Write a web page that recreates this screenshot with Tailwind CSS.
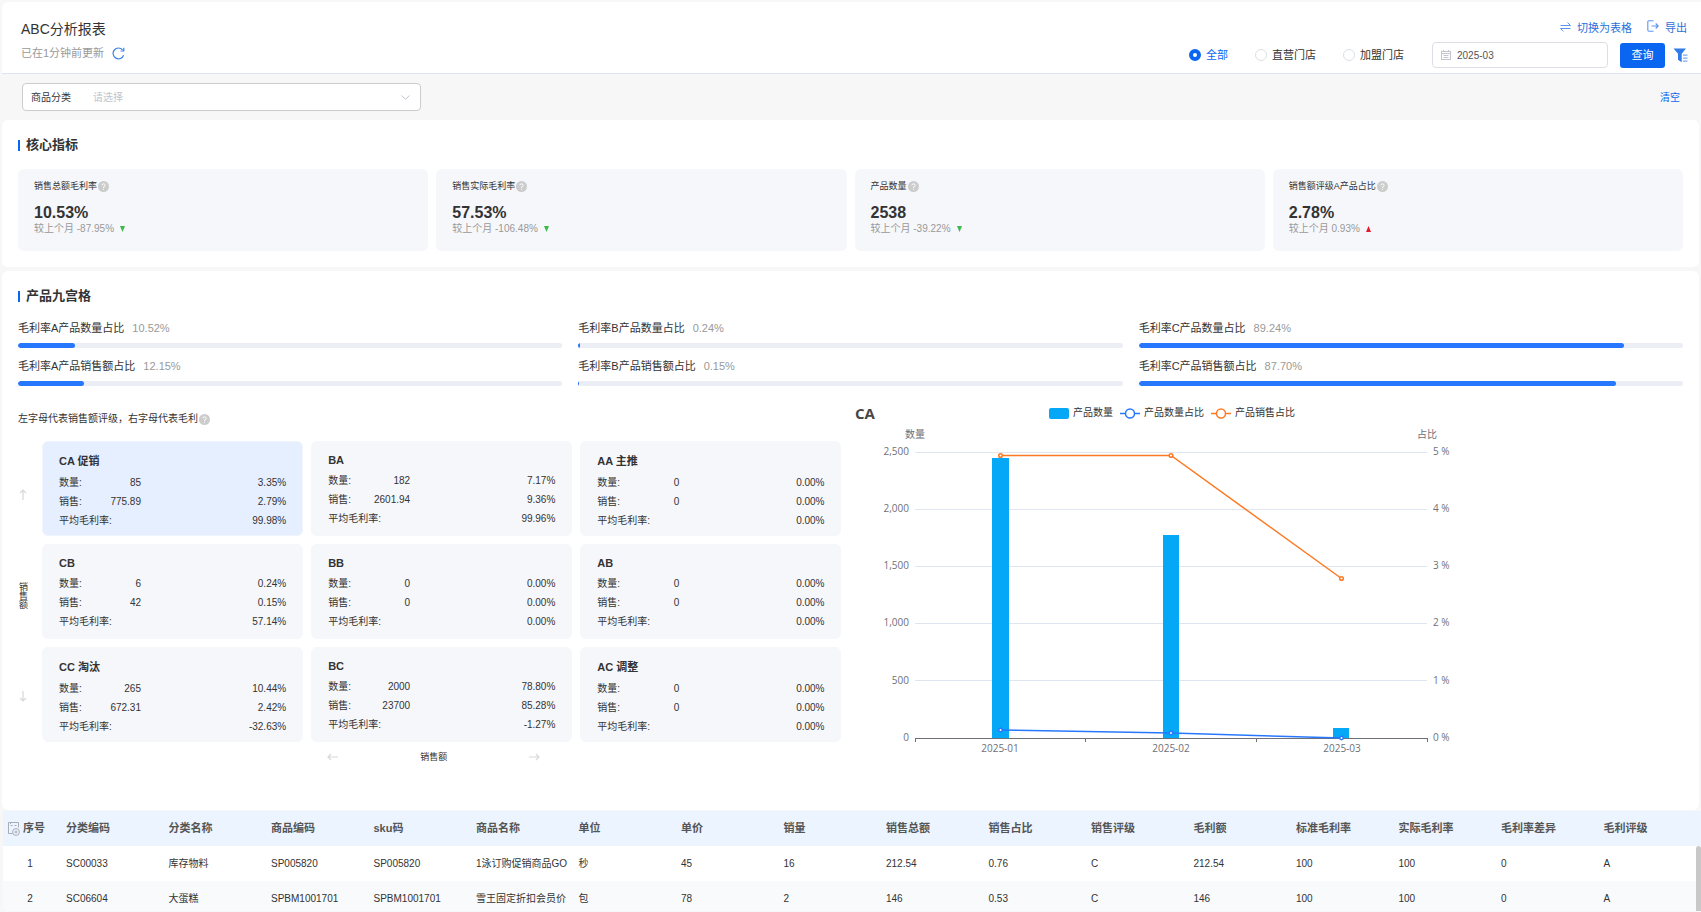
<!doctype html>
<html lang="zh-CN">
  <head>
    <meta charset="UTF-8" />
    <meta name="viewport" content="width=device-width, initial-scale=1.0" />
    <title>ABC分析报表</title>
    <script src="https://cdn.jsdelivr.net/npm/@tailwindcss/browser@4"></script>
  </head>
  <body
    class="flex h-screen flex-col overflow-hidden bg-[#f7f7f7] pt-[2px] pb-px pl-[2px] font-['Liberation_Sans','Noto_Sans_CJK_SC',sans-serif] text-[#333]"
  >
    <header
      class="flex shrink-0 justify-between rounded-tl-md border-b border-[#dbe3f5] bg-white pr-[13px] pb-[5px] pl-[19px]"
    >
      <div class="pt-[17px]">
        <h1 class="text-sm leading-5">ABC分析报表</h1>
        <div class="mt-[6px] flex items-center gap-2 text-[11px] leading-4 text-[#999]">
          已在1分钟前更新
          <button type="button" aria-label="刷新">
            <svg class="block size-[13px]" viewBox="0 0 13 13" fill="none" stroke="#3b82e0" stroke-width="1.2">
              <path d="M11.6 8.2A5.4 5.4 0 1 1 10.6 2.9" />
              <path d="M11.8 0.8V4H8.6" />
            </svg>
          </button>
        </div>
      </div>

      <div class="flex flex-col items-end pt-[18px]">
        <div class="mr-px flex gap-[15px] text-[11px] leading-4 text-[#2b6fdb]">
          <a href="#" class="flex items-center gap-[6px]">
            <svg class="-mt-1 size-[11px]" viewBox="0 0 11 11" fill="none" stroke="#5a96ee" stroke-width="1">
              <path d="M0.5 4.5H10.5L7.5 1.5M10.5 7.5H0.5L3.5 10.3" />
            </svg>
            切换为表格
          </a>
          <a href="#" class="flex items-center gap-[6px]">
            <svg class="-mt-1 size-3" viewBox="0 0 12 12" fill="none" stroke="#5a96ee" stroke-width="1.1">
              <path d="M6.5 0.8H2A1.2 1.2 0 0 0 0.8 2V10A1.2 1.2 0 0 0 2 11.2H6.5M4.5 6H11M8.7 3.5L11.2 6L8.7 8.5" />
            </svg>
            导出
          </a>
        </div>
        <form class="mt-[6px] flex items-center text-[11px]" onsubmit="event.preventDefault()">
          <div class="mr-7 flex items-center gap-[27px]">
            <label class="flex items-center gap-[5px] text-[#0a66f0]">
              <input
                type="radio"
                name="store"
                checked
                class="size-3 appearance-none rounded-full border border-[#dcdfe6] bg-white checked:border-4 checked:border-[#0a66f0]"
              />
              全部
            </label>
            <label class="flex items-center gap-[5px]">
              <input
                type="radio"
                name="store"
                class="size-3 appearance-none rounded-full border border-[#dcdfe6] bg-white checked:border-4 checked:border-[#0a66f0]"
              />
              直营门店
            </label>
            <label class="flex items-center gap-[5px]">
              <input
                type="radio"
                name="store"
                class="size-3 appearance-none rounded-full border border-[#dcdfe6] bg-white checked:border-4 checked:border-[#0a66f0]"
              />
              加盟门店
            </label>
          </div>
          <label class="mr-3 flex h-[26px] w-44 items-center gap-[6px] rounded-sm border border-[#dcdfe6] pl-2">
            <svg class="size-[10px] shrink-0" viewBox="0 0 10 10" fill="none" stroke="#c5c5d0" stroke-width="1">
              <rect x="0.5" y="1.5" width="9" height="8" />
              <path d="M0.5 3.5H9.5M2.5 5.5H7.5M2.5 7.5H7.5M2.5 0V2M7.5 0V2" />
            </svg>
            <input type="text" value="2025-03" aria-label="月份" class="w-full text-[10px] text-[#555] outline-none" />
          </label>
          <button type="submit" class="h-[25px] w-[45px] rounded-[3px] bg-[#0a66f0] text-white">查询</button>
          <button type="button" aria-label="筛选" class="ml-2">
            <svg class="block h-[15px] w-[15px]" viewBox="0 0 15 15">
              <path fill="#2f7bea" d="M0.5 0.5H13L8.7 5.8V14.2L5 11.8V5.8Z" />
              <path stroke="#78aaf3" stroke-width="1.3" d="M10 7.2H14.5M10 10.2H14.5M10 13.2H14.5" />
            </svg>
          </button>
        </form>
      </div>
    </header>

    <div class="flex shrink-0 items-center justify-between py-[9px] pr-[21px] pl-5 text-[10px]">
      <div class="relative flex h-7 w-[399px] items-center rounded border border-[#ccc] bg-white pl-2">
        <label for="category" class="w-[62px] shrink-0">商品分类</label>
        <select id="category" class="h-full w-full appearance-none text-[#c0c4cc] outline-none">
          <option>请选择</option>
        </select>
        <svg class="pointer-events-none absolute right-[10px] h-[5px] w-[9px]" viewBox="0 0 9 5" fill="none" stroke="#c0c4cc">
          <path d="M0.5 0.5L4.5 4.3L8.5 0.5" />
        </svg>
      </div>
      <button type="button" class="text-[#0a66f0]">清空</button>
    </div>

    <section class="mr-[2px] shrink-0 rounded-md bg-white px-4 pt-[15px] pb-4">
      <h2 class="flex items-center gap-[6px] text-[13px] leading-5 font-bold">
        <span class="h-[11px] w-[2px] bg-[#0a66f0]"></span>核心指标
      </h2>
      <div id="kpis" class="mt-[14px] grid grid-cols-4 gap-2"></div>
    </section>

    <section class="mt-1 mr-[2px] shrink-0 rounded-md bg-white px-4 pt-[15px] pb-[45px]">
      <h2 class="flex items-center gap-[6px] text-[13px] leading-5 font-bold">
        <span class="h-[11px] w-[2px] bg-[#0a66f0]"></span>产品九宫格
      </h2>
      <div id="progress" class="mt-[14px] grid grid-cols-3 gap-x-4 gap-y-[10px]"></div>

      <div class="grid grid-cols-2 gap-[18px]">
        <div class="pt-[25px]">
          <p class="flex items-center gap-px text-[10px] leading-4">
            左字母代表销售额评级，右字母代表毛利
            <svg class="size-[11px]" viewBox="0 0 11 11">
              <circle cx="5.5" cy="5.5" r="5.5" fill="#ccc" />
              <path d="M3.9 4.3A1.6 1.6 0 1 1 5.5 6V6.9M5.5 7.8V8.8" fill="none" stroke="#fff" />
            </svg>
          </p>
          <div class="mt-[14px] flex">
            <!-- y axis -->
            <div class="flex w-6 shrink-0 flex-col items-start justify-between pt-12 pb-10 text-[9px]">
              <svg class="h-[11px] w-[10px]" viewBox="0 0 10 11" fill="none" stroke="#d8d8d8" stroke-width="1.2">
                <path d="M5 11V1M2 4L5 1L8 4" />
              </svg>
              <span class="leading-[10px] [text-orientation:upright] [writing-mode:vertical-rl]">销售额</span>
              <svg class="h-[11px] w-[10px]" viewBox="0 0 10 11" fill="none" stroke="#d8d8d8" stroke-width="1.2">
                <path d="M5 0V10M2 7L5 10L8 7" />
              </svg>
            </div>
            <div id="nine" class="grid grow grid-cols-3 gap-2"></div>
          </div>
          <!-- x axis -->
          <div class="mt-[7px] ml-6 grid grid-cols-3 gap-2 text-[9px] leading-4">
            <div class="col-start-2 flex items-center justify-between pr-8 pl-4">
              <svg class="h-[10px] w-[11px]" viewBox="0 0 11 10" fill="none" stroke="#d8d8d8" stroke-width="1.2">
                <path d="M11 5H1M4 2L1 5L4 8" />
              </svg>
              <span>销售额</span>
              <svg class="h-[10px] w-[11px]" viewBox="0 0 11 10" fill="none" stroke="#d8d8d8" stroke-width="1.2">
                <path d="M0 5H10M7 2L10 5L7 8" />
              </svg>
            </div>
          </div>
        </div>

        <svg
          class="mt-[14px] -ml-[10px] h-[360px] w-[600px] font-['Open_Sans','Noto_Sans_CJK_SC',sans-serif] text-[10px]"
          viewBox="0 0 600 360"
          fill="#6e7079"
        >
          <text x="5" y="19" class="text-[15px] font-bold" fill="#464646">CA</text>

          <g fill="#333">
            <rect x="199" y="8" width="20" height="11" rx="2" fill="#05a8f7" />
            <text x="223" y="16">产品数量</text>
            <path d="M270 13.5H290" stroke="#2878ff" stroke-width="1.5" />
            <circle cx="280" cy="13.5" r="4.5" fill="#fff" stroke="#2878ff" stroke-width="1.5" />
            <text x="294" y="16">产品数量占比</text>
            <path d="M361 13.5H381" stroke="#fc7a24" stroke-width="1.5" />
            <circle cx="371" cy="13.5" r="4.5" fill="#fff" stroke="#fc7a24" stroke-width="1.5" />
            <text x="385" y="16">产品销售占比</text>
          </g>

          <text x="65" y="38" text-anchor="middle">数量</text>
          <text x="577" y="38" text-anchor="middle">占比</text>

          <path
            d="M65 52.5H577M65 109.5H577M65 166.5H577M65 223.5H577M65 280.5H577"
            stroke="#e0e6f1"
          />
          <g text-anchor="end">
            <text x="59" y="55">2,500</text>
            <text x="59" y="112">2,000</text>
            <text x="59" y="169">1,500</text>
            <text x="59" y="226">1,000</text>
            <text x="59" y="284">500</text>
            <text x="59" y="341">0</text>
          </g>
          <g>
            <text x="583" y="55">5 %</text>
            <text x="583" y="112">4 %</text>
            <text x="583" y="169">3 %</text>
            <text x="583" y="226">2 %</text>
            <text x="583" y="284">1 %</text>
            <text x="583" y="341">0 %</text>
          </g>

          <g fill="#05a8f7">
            <rect x="142" y="58" width="17" height="280" />
            <rect x="313" y="135" width="16" height="203" />
            <rect x="483" y="328" width="16" height="10" />
          </g>
          <path d="M65 338.5H577.5M65.5 338V342M235.5 338V342M406.5 338V342M577.5 338V342" stroke="#6e7079" fill="none" />
          <g text-anchor="middle">
            <text x="150" y="352">2025-01</text>
            <text x="321" y="352">2025-02</text>
            <text x="492" y="352">2025-03</text>
          </g>

          <g fill="none" stroke="#2878ff" stroke-width="1.5">
            <path d="M150.5 330L321 333L491.5 338" />
            <g fill="#fff" stroke-width="1.5">
              <circle cx="150.5" cy="330" r="1.7" />
              <circle cx="321" cy="333" r="1.7" />
              <circle cx="491.5" cy="338" r="1.7" />
            </g>
          </g>
          <g fill="none" stroke="#fc7a24" stroke-width="1.5">
            <path d="M150.5 55.5H321L491.5 178.5" />
            <g fill="#fff" stroke-width="1.5">
              <circle cx="150.5" cy="55.5" r="1.8" />
              <circle cx="321" cy="55.5" r="1.8" />
              <circle cx="491.5" cy="178.5" r="1.8" />
            </g>
          </g>
        </svg>
      </div>
    </section>

    <div class="relative mt-px ml-px grow overflow-hidden rounded-bl-md bg-white">
      <table class="w-full table-fixed text-left text-[10px]">
        <thead class="bg-[#ecf4ff] text-[11px] text-[#555]">
          <tr id="thead" class="h-[35px]"></tr>
        </thead>
        <tbody id="tbody"></tbody>
      </table>
      <div class="absolute top-[35px] right-0 h-24 w-[5px] rounded-t-sm bg-[#c8c8c8]"></div>
    </div>

    <script>
      const kpis = [
        ["销售总额毛利率", "10.53%", "-87.95%", false],
        ["销售实际毛利率", "57.53%", "-106.48%", false],
        ["产品数量", "2538", "-39.22%", false],
        ["销售额评级A产品占比", "2.78%", "0.93%", true],
      ];
      document.getElementById("kpis").innerHTML = kpis
        .map(
          ([name, value, diff, up]) => `
          <div class="rounded-md bg-[#f6f7fb] px-4 pt-[10px] pb-4">
            <div class="flex items-center gap-px text-[9px] leading-[14px]">${name}
              <svg class="size-[11px]" viewBox="0 0 11 11">
                <circle cx="5.5" cy="5.5" r="5.5" fill="#ccc" />
                <path d="M3.9 4.3A1.6 1.6 0 1 1 5.5 6V6.9M5.5 7.8V8.8" fill="none" stroke="#fff" />
              </svg>
            </div>
            <div class="mt-[10px] text-base leading-5 font-bold">${value}</div>
            <div class="flex items-center gap-[6px] text-[10px] leading-3 text-[#999]">较上个月 ${diff}
              <svg class="h-[6px] w-[5px]" viewBox="0 0 5 6">
                ${up ? '<path fill="#e8192c" d="M2.5 0L5 6H0Z" />' : '<path fill="#3cb94a" d="M0 0H5L2.5 6Z" />'}
              </svg>
            </div>
          </div>`
        )
        .join("");

      const progress = [
        ["毛利率A产品数量占比", "10.52%"],
        ["毛利率B产品数量占比", "0.24%"],
        ["毛利率C产品数量占比", "89.24%"],
        ["毛利率A产品销售额占比", "12.15%"],
        ["毛利率B产品销售额占比", "0.15%"],
        ["毛利率C产品销售额占比", "87.70%"],
      ];
      document.getElementById("progress").innerHTML = progress
        .map(
          ([name, pct]) => `
          <div>
            <div class="flex gap-2 text-[11px] leading-4">${name}<span class="text-[#999]">${pct}</span></div>
            <div class="mt-[7px] h-[5px] overflow-hidden rounded-full bg-[#ebeef5]">
              <div class="h-full rounded-full bg-[#2878ff]" style="width: ${pct}"></div>
            </div>
          </div>`
        )
        .join("");

      const nine = [
        ["CA 促销", "85", "3.35%", "775.89", "2.79%", "99.98%"],
        ["BA", "182", "7.17%", "2601.94", "9.36%", "99.96%"],
        ["AA 主推", "0", "0.00%", "0", "0.00%", "0.00%"],
        ["CB", "6", "0.24%", "42", "0.15%", "57.14%"],
        ["BB", "0", "0.00%", "0", "0.00%", "0.00%"],
        ["AB", "0", "0.00%", "0", "0.00%", "0.00%"],
        ["CC 淘汰", "265", "10.44%", "672.31", "2.42%", "-32.63%"],
        ["BC", "2000", "78.80%", "23700", "85.28%", "-1.27%"],
        ["AC 调整", "0", "0.00%", "0", "0.00%", "0.00%"],
      ];
      const line = (label, value, pct) => `
        <div class="flex justify-between text-[10px] leading-[19px]">
          <div class="flex w-[82px] justify-between"><span>${label}</span><span>${value}</span></div>
          <span>${pct}</span>
        </div>`;
      document.getElementById("nine").innerHTML = nine
        .map(
          ([title, count, countPct, sales, salesPct, rate], i) => `
          <div class="h-[95px] rounded-md border ${i === 0 ? "border-[#f0f5fd] bg-[#e5efff]" : "border-[#f6f7fb] bg-[#f6f7fb]"} px-4 pt-2">
            <h3 class="text-[11px] font-bold ${title.length > 2 ? "leading-[23px]" : "mb-px leading-5"}">${title}</h3>
            ${line("数量:", count, countPct)}
            ${line("销售:", sales, salesPct)}
            ${line("平均毛利率:", "", rate)}
          </div>`
        )
        .join("");

      const columns = ["分类编码", "分类名称", "商品编码", "sku码", "商品名称", "单位", "单价", "销量", "销售总额", "销售占比", "销售评级", "毛利额", "标准毛利率", "实际毛利率", "毛利率差异", "毛利评级"];
      const rows = [
        ["SC00033", "库存物料", "SP005820", "SP005820", "1泳订购促销商品GO", "秒", "45", "16", "212.54", "0.76", "C", "212.54", "100", "100", "0", "A"],
        ["SC06604", "大蛋糕", "SPBM1001701", "SPBM1001701", "雪王固定折扣会员价", "包", "78", "2", "146", "0.53", "C", "146", "100", "100", "0", "A"],
      ];
      document.getElementById("thead").innerHTML =
        `<th class="w-14 pl-[5px]">
          <span class="flex items-center gap-[3px]">
            <svg class="h-[14px] w-3 shrink-0" viewBox="0 0 12 14" fill="none" stroke="#a8acb3">
              <path d="M4.5 11.5H0.5V0.5H10.5V5.5M2.5 3.5H4.5M6.5 3.5H8.5M2.5 0.5V2" />
              <circle cx="8" cy="10" r="3.4" />
              <circle cx="8" cy="10" r="1" />
            </svg>序号
          </span>
        </th>` +
        columns.map((name) => `<th class="pl-[7px]">${name}</th>`).join("") +
        `<th class="w-[2px]"></th>`;
      document.getElementById("tbody").innerHTML = rows
        .map(
          (row, i) => `
          <tr class="h-[35px] even:bg-[#f8fafc]">
            <td class="pr-[2px] text-center">${i + 1}</td>
            ${row.map((cell) => `<td class="overflow-hidden pl-[7px] whitespace-nowrap">${cell}</td>`).join("")}
            <td></td>
          </tr>`
        )
        .join("");
    </script>
  </body>
</html>
